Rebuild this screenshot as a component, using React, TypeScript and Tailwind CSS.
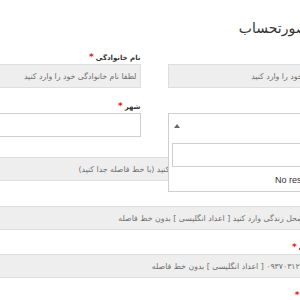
import React from 'react';

type FieldProps = {
  label: string;
  required?: boolean;
  placeholder?: string;
  white?: boolean;
  className?: string;
};

const Field: React.FC<FieldProps> = ({ label, required, placeholder, white, className = '' }) => {
  return (
    <div className={`flex flex-col ${className}`}>
      <label className="h-[14px] leading-[14px] text-[7px] font-bold text-[#333] whitespace-nowrap">
        {label}
        {required && <span className="text-[#e01a1a] text-[9px] mr-[2px]">*</span>}
      </label>
      <input
        readOnly
        placeholder={placeholder}
        className={`h-[24px] w-full px-[3px] text-[7.8px] outline-none placeholder:text-[#707070] ${
          white ? 'bg-white border border-[#cfcfcf]' : 'bg-[#eeeeee] border border-[#dedede]'
        }`}
      />
    </div>
  );
};

export default function App() {
  return (
    <div className="w-[300px] h-[300px] overflow-hidden bg-white font-['DejaVu_Sans',sans-serif]">
      <div dir="rtl" className="w-[364px] ml-[-28px]">
        <h3 className="pt-[19px] h-[38px] -mr-[18px] text-[14px] leading-[18px] text-[#333]">جزئیات صورتحساب</h3>

        <div className="grid grid-cols-2 gap-x-[27px] mt-[12px]">
          <Field label="نام" required placeholder="لطفا نام خود را وارد کنید" />
          <Field label="نام خانوادگی" required placeholder="لطفا نام خانوادگی خود را وارد کنید" />

          {/* province select, opened */}
          <div className="relative flex flex-col mt-[11px]">
            <label className="h-[14px] leading-[14px] text-[7px] font-bold text-[#333] whitespace-nowrap">
              استان
            </label>
            <div className="h-[24px] bg-white border-t border-x border-[#cfcfcf] flex items-center justify-end pl-[5px]">
              <span className="w-0 h-0 border-x-[3px] border-x-transparent border-b-[4px] border-b-[#666]" />
            </div>
            <div className="absolute top-full left-0 w-[180px] z-10 bg-white border-x border-b border-[#cfcfcf] px-[3px] pt-[6px] pb-[4px]">
              <input readOnly className="h-[24px] w-full border border-[#cfcfcf] outline-none" />
              <div dir="ltr" className="pt-[7px] h-[20px] text-[9px] leading-[12px] text-[#333] text-right pr-[3px] font-['Liberation_Sans',sans-serif]">
                No results found
              </div>
            </div>
          </div>
          <Field label="شهر" required white className="mt-[11px]" />
        </div>

        <Field
          label="آدرس"
          required
          className="mt-[6px]"
          placeholder="آدرس دقیق کامل پستی محل سکونت خود را وارد کنید (با خط فاصله جدا کنید)"
        />
        <Field
          label="کد پستی"
          className="mt-[11px]"
          placeholder="کد پستی محل زندگی وارد کنید [ اعداد انگلیسی ] بدون خط فاصله"
        />
        <Field
          label="تلفن‌همراه"
          required
          className="mt-[10px]"
          placeholder="مثال: ۰۹۳۷۰۳۱۲۹۹۳ [ اعداد انگلیسی ] بدون خط فاصله"
        />
        <Field
          label="تلفن ثابت"
          required
          className="mt-[10px]"
          placeholder="شماره تلفن ثابت خود را همراه با کد شهر وارد کنید"
        />
      </div>
    </div>
  );
}
